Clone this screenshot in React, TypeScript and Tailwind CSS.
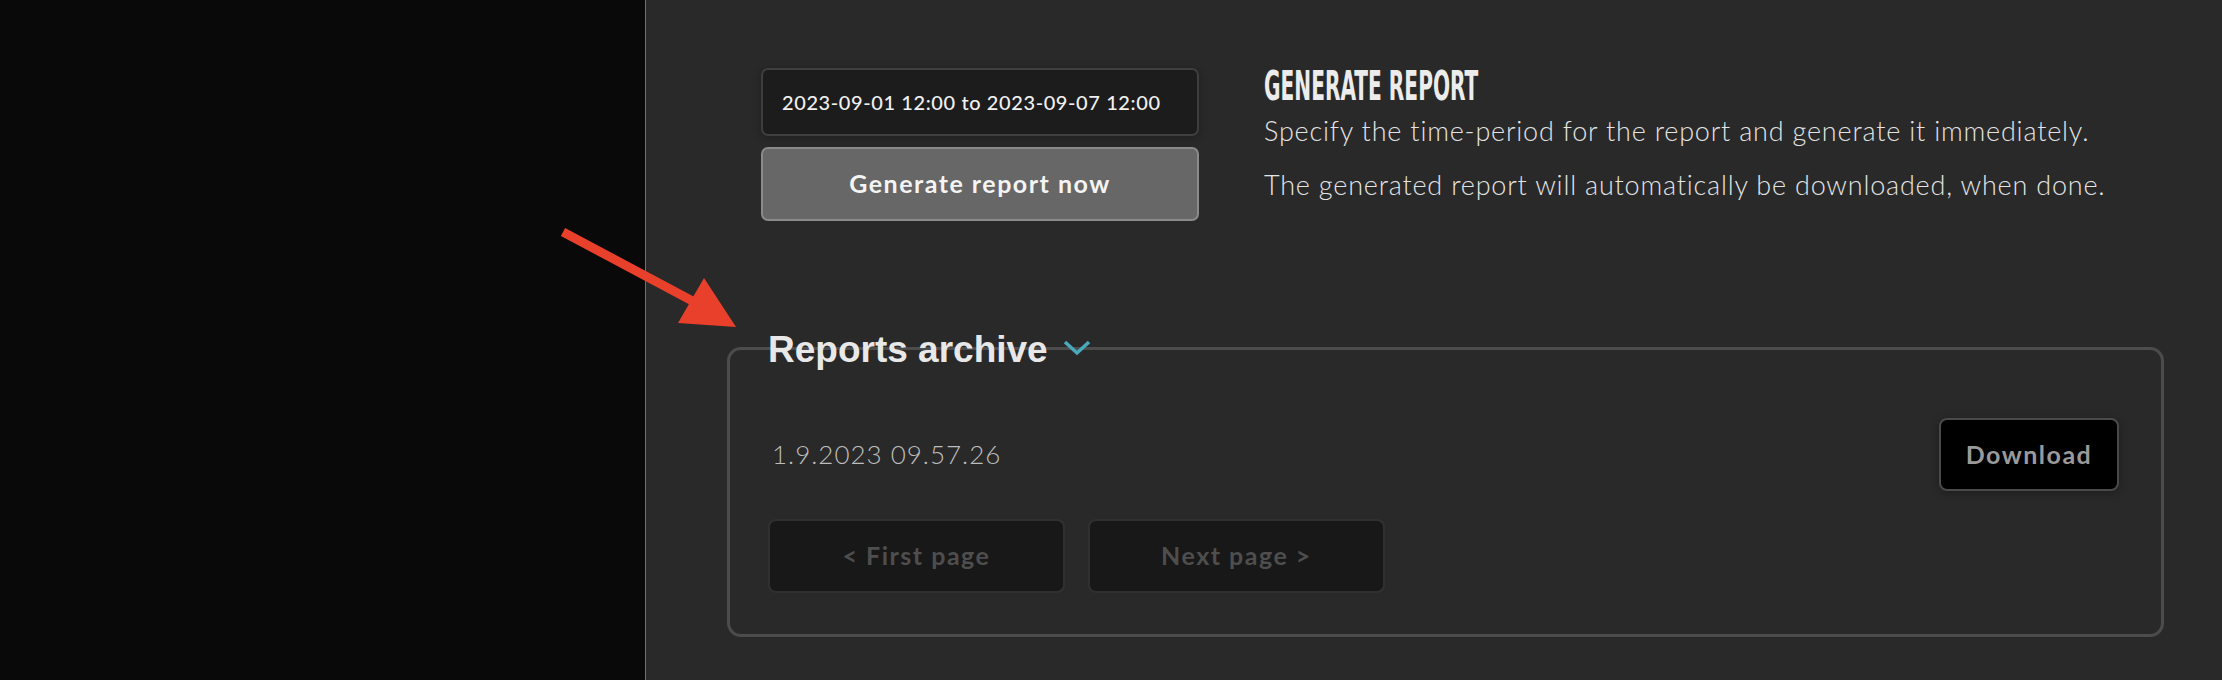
import React from 'react'

const body = { fontFamily: "Lato, 'Open Sans', sans-serif" }

const App: React.FC = () => {
  return (
    <div className="relative flex h-[680px] w-[2222px] overflow-hidden bg-[#292929]" style={body}>
      <div className="h-full w-[646px] shrink-0 border-r border-[#707070] bg-[#090909]" />

      <div className="flex flex-1 flex-col">
        <div className="ml-[115px] mt-[68px] flex">
          <div className="flex w-[438px] flex-col gap-[11px]">
            <div className="flex h-[68px] items-center rounded-[7px] border-2 border-[#3e3e3e] bg-[#1c1c1c] pl-[19px] text-[20px] font-medium tracking-[0.6px] text-[#f0f0f0] shadow-[0_2px_8px_rgba(0,0,0,0.25)]">
              2023-09-01 12:00 to 2023-09-07 12:00
            </div>
            <button className="h-[74px] rounded-[7px] border-2 border-[#8a8a8a] bg-[#676767] text-[25px] font-bold tracking-[1.5px] text-[#f4f4f4]">
              Generate report now
            </button>
          </div>

          <div className="ml-[65px] flex flex-col">
            <h2
              className="-mt-[2px] inline-block origin-left scale-x-[0.56] whitespace-nowrap text-[40px] font-bold leading-none text-[#ececec]"
              style={{ fontFamily: "'DejaVu Sans Condensed', 'DejaVu Sans', sans-serif" }}
            >
              GENERATE REPORT
            </h2>
            <p className="mt-[8px] whitespace-nowrap text-[27px] font-light leading-[34px] tracking-[0.8px] text-[#e4e4e4]">
              Specify the time-period for the report and generate it immediately.
            </p>
            <p className="mt-[20px] whitespace-nowrap text-[27px] font-light leading-[34px] tracking-[0.8px] text-[#e4e4e4]">
              The generated report will automatically be downloaded, when done.
            </p>
          </div>
        </div>

        <div className="ml-[81px] mr-[58px] mt-[126px] rounded-[14px] border-[3px] border-[#4c4c4c] pb-[41px] pl-[38px] pr-[42px]">
          <div className="-mt-[22px] flex items-start gap-[14px]">
            <h3
              className="text-[37px] font-bold leading-[44px] text-[#e8e8e8]"
              style={{ fontFamily: "'Liberation Sans', Arial, sans-serif" }}
            >
              Reports archive
            </h3>
            <svg width="30" height="18" viewBox="0 0 30 18" className="mt-[11px]">
              <polyline points="3,3 15,14 27,3" fill="none" stroke="#4aaabb" strokeWidth="3.5" />
            </svg>
          </div>

          <div className="mt-[46px] flex items-center justify-between">
            <span className="pl-[4px] text-[26px] font-light tracking-[1px] text-[#bdbdbd]">1.9.2023 09.57.26</span>
            <button className="h-[73px] w-[180px] rounded-[8px] border-2 border-[#4a4a4a] bg-black text-[25px] font-bold tracking-[1.5px] text-[#9a9a9a] shadow-[0_2px_10px_rgba(0,0,0,0.3)]">
              Download
            </button>
          </div>

          <div className="mt-[28px] flex gap-[23px]">
            <button className="h-[74px] w-[297px] rounded-[8px] border-2 border-[#303030] bg-[#181818] text-[25px] font-bold tracking-[1.5px] text-[#4e4e4e]">
              &lt; First page
            </button>
            <button className="h-[74px] w-[297px] rounded-[8px] border-2 border-[#303030] bg-[#181818] text-[25px] font-bold tracking-[1.5px] text-[#4e4e4e]">
              Next page &gt;
            </button>
          </div>
        </div>
      </div>

      <svg className="pointer-events-none absolute inset-0" width="2222" height="680">
        <line x1="563" y1="232" x2="700" y2="305" stroke="#e8402a" strokeWidth="9" />
        <polygon points="736,327 704,278 678,323" fill="#e8402a" />
      </svg>
    </div>
  )
}

export default App
